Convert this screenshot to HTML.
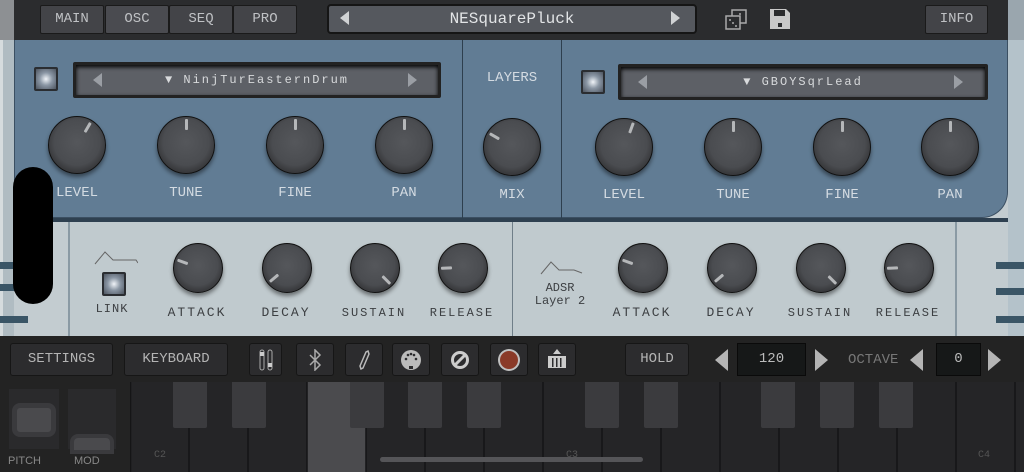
<!DOCTYPE html>
<html><head><meta charset="utf-8"><style>
*{margin:0;padding:0;box-sizing:border-box}
body{width:1024px;height:472px;overflow:hidden;background:#c3ccd0;position:relative;font-family:"Liberation Mono","DejaVu Sans Mono",monospace;}
.a{position:absolute}
.top{left:0;top:0;width:1024px;height:40px;background:#2b2c2e}
.tab{position:absolute;top:5px;height:29px;background:#434448;border:1px solid #1a1a1a;border-radius:2px;color:#bfc1c4;font-size:14px;text-align:center;line-height:27px}
.blue{left:14px;top:40px;width:994px;height:178px;background:#617c94;border-radius:0 0 26px 26px;border:1px solid #3b4f62;border-top:none}
.gray{left:68px;top:222px;width:888px;height:114px;background:#c0cace;border-left:2px solid #8a9aa4}
.disp{position:absolute;height:36px;background:#5d6066;border:3px solid #222;border-radius:2px;box-shadow:inset 0 2px 4px #000;color:#d8dadc;font-size:12px;letter-spacing:2px;text-align:center;line-height:30px}
.k{position:absolute;border-radius:50%;background:radial-gradient(circle at 50% 45%,#55575b 0,#4a4c50 55%,#3a3b3e 70%,#2a2b2d 100%);border:1px solid #111;box-shadow:0 3px 4px rgba(0,0,0,.45)}
.k i{position:absolute;inset:0;display:block}
.k i:before{content:"";position:absolute;left:50%;top:2px;width:3px;margin-left:-1.5px;height:11px;background:#b5b7b9;border-radius:1px}
.lb{position:absolute;color:#d4dbe2;font-size:14px;text-align:center;width:90px}
.lg{position:absolute;color:#3c3f42;font-size:13px;letter-spacing:2px;text-align:center;width:100px}
.led{position:absolute;width:24px;height:24px;background:radial-gradient(circle,#f0f4f8 0,#8a96a4 45%,#4d5560 100%);border:2px solid #2a2d31;border-radius:2px}
.tb{position:absolute;top:343px;height:33px;background:#2c2c2e;border:1px solid #161616;border-radius:3px;color:#b4b4b4;font-size:14px;text-align:center;line-height:31px}
.bk{position:absolute;top:382px;height:46px;width:34px;background:#3b3b3e;border-radius:0 0 2px 2px}
.line{position:absolute;height:7px;background:#3a5566}
</style></head><body>
<div class="a" style="left:0;top:0;width:14px;height:40px;background:#8d9093"></div>
<div class="a top" style="left:14px;width:994px"></div>
<div class="a" style="left:1008px;top:0;width:16px;height:40px;background:#9aa6ae"></div>
<div class="tab" style="left:40px;width:64px">MAIN</div>
<div class="tab" style="left:105px;width:64px;background:#4a4b50">OSC</div>
<div class="tab" style="left:169px;width:64px">SEQ</div>
<div class="tab" style="left:233px;width:64px">PRO</div>
<div class="a" style="left:327px;top:4px;width:370px;height:30px;background:#55585e;border:2px solid #151515;border-radius:4px;color:#e2e4e6;font-size:16px;text-align:center;line-height:26px">NESquarePluck</div>
<div class="a" style="left:340px;top:11px;width:0;height:0;border:7px solid transparent;border-right:9px solid #d0d2d4;border-left:0"></div>
<div class="a" style="left:671px;top:11px;width:0;height:0;border:7px solid transparent;border-left:9px solid #d0d2d4;border-right:0"></div>
<svg class="a" style="left:724px;top:9px" width="24" height="22"><rect x="8" y="1" width="14" height="13" fill="none" stroke="#aaa" stroke-width="1.5"/><rect x="2" y="7" width="14" height="13" fill="#2b2c2e" stroke="#aaa" stroke-width="1.5"/><circle cx="6" cy="11" r="1" fill="#aaa"/><circle cx="9" cy="14" r="1" fill="#aaa"/><circle cx="12" cy="17" r="1" fill="#aaa"/><circle cx="16" cy="5" r="1" fill="#aaa"/></svg>
<svg class="a" style="left:769px;top:8px" width="22" height="22"><path d="M1 1H17L21 5V21H1Z" fill="#c9c9c9"/><rect x="5" y="2" width="11" height="6" fill="#2b2c2e"/><rect x="9" y="15" width="4" height="4" fill="#2b2c2e"/></svg>
<div class="tab" style="left:925px;width:63px">INFO</div>

<div class="a" style="left:0;top:40px;width:14px;height:296px;background:#b0bcc2"></div>
<div class="a" style="left:0;top:40px;width:3px;height:296px;background:#d6dcde"></div>
<div class="a blue"></div>
<div class="a" style="left:1008px;top:40px;width:16px;height:296px;background:#b4c2ca"></div>
<div class="a" style="left:462px;top:40px;width:1px;height:178px;background:#2e3f4e"></div>
<div class="a" style="left:561px;top:40px;width:1px;height:178px;background:#2e3f4e"></div>
<div class="a" style="left:14px;top:218px;width:994px;height:4px;background:#2e4050"></div>

<div class="led" style="left:34px;top:67px"></div>
<div class="disp" style="left:73px;top:62px;width:368px">▼ NinjTurEasternDrum</div>
<div class="a" style="left:93px;top:73px;border:7px solid transparent;border-right:9px solid #9a9ea4;border-left:0"></div>
<div class="a" style="left:408px;top:73px;border:7px solid transparent;border-left:9px solid #9a9ea4;border-right:0"></div>
<div class="lb" style="left:467px;top:70px;width:90px">LAYERS</div>
<div class="led" style="left:581px;top:70px"></div>
<div class="disp" style="left:618px;top:64px;width:370px">▼ GBOYSqrLead</div>
<div class="a" style="left:638px;top:75px;border:7px solid transparent;border-right:9px solid #9a9ea4;border-left:0"></div>
<div class="a" style="left:954px;top:75px;border:7px solid transparent;border-left:9px solid #9a9ea4;border-right:0"></div>

<div class="k" style="left:48px;top:116px;width:58px;height:58px"><i style="transform:rotate(30deg)"></i></div>
<div class="k" style="left:157px;top:116px;width:58px;height:58px"><i></i></div>
<div class="k" style="left:266px;top:116px;width:58px;height:58px"><i></i></div>
<div class="k" style="left:375px;top:116px;width:58px;height:58px"><i></i></div>
<div class="k" style="left:483px;top:118px;width:58px;height:58px"><i style="transform:rotate(-60deg)"></i></div>
<div class="k" style="left:595px;top:118px;width:58px;height:58px"><i style="transform:rotate(20deg)"></i></div>
<div class="k" style="left:704px;top:118px;width:58px;height:58px"><i></i></div>
<div class="k" style="left:813px;top:118px;width:58px;height:58px"><i></i></div>
<div class="k" style="left:921px;top:118px;width:58px;height:58px"><i></i></div>
<div class="lb" style="left:32px;top:185px">LEVEL</div>
<div class="lb" style="left:141px;top:185px">TUNE</div>
<div class="lb" style="left:250px;top:185px">FINE</div>
<div class="lb" style="left:359px;top:185px">PAN</div>
<div class="lb" style="left:467px;top:187px">MIX</div>
<div class="lb" style="left:579px;top:187px">LEVEL</div>
<div class="lb" style="left:688px;top:187px">TUNE</div>
<div class="lb" style="left:797px;top:187px">FINE</div>
<div class="lb" style="left:905px;top:187px">PAN</div>

<div class="a gray"></div>
<div class="a" style="left:512px;top:222px;width:1px;height:114px;background:#6f7e88"></div>
<div class="a" style="left:955px;top:222px;width:2px;height:114px;background:#8a9aa4"></div>
<div class="line" style="left:0;top:262px;width:40px"></div>
<div class="line" style="left:0;top:284px;width:40px"></div>
<div class="line" style="left:0;top:316px;width:28px"></div>
<div class="line" style="left:996px;top:262px;width:28px"></div>
<div class="line" style="left:996px;top:288px;width:28px"></div>
<div class="line" style="left:996px;top:316px;width:28px"></div>
<div class="a" style="left:13px;top:167px;width:40px;height:137px;background:#000;border-radius:20px"></div>

<svg class="a" style="left:94px;top:250px" width="44" height="16"><path d="M1 14L11 2L19 10H42L44 13" fill="none" stroke="#666" stroke-width="1"/></svg>
<div class="led" style="left:102px;top:272px"></div>
<div class="lg" style="left:62px;top:302px;font-size:12px;letter-spacing:1px">LINK</div>
<svg class="a" style="left:540px;top:260px" width="44" height="16"><path d="M1 14L11 2L19 10H34L42 13" fill="none" stroke="#666" stroke-width="1"/></svg>
<div class="lg" style="left:510px;top:282px;font-size:12px;letter-spacing:0;line-height:13px">ADSR<br>Layer 2</div>
<div class="k" style="left:173px;top:243px;width:50px;height:50px"><i style="transform:rotate(-70deg)"></i></div>
<div class="k" style="left:262px;top:243px;width:50px;height:50px"><i style="transform:rotate(-130deg)"></i></div>
<div class="k" style="left:350px;top:243px;width:50px;height:50px"><i style="transform:rotate(135deg)"></i></div>
<div class="k" style="left:438px;top:243px;width:50px;height:50px"><i style="transform:rotate(-92deg)"></i></div>
<div class="k" style="left:618px;top:243px;width:50px;height:50px"><i style="transform:rotate(-70deg)"></i></div>
<div class="k" style="left:707px;top:243px;width:50px;height:50px"><i style="transform:rotate(-130deg)"></i></div>
<div class="k" style="left:796px;top:243px;width:50px;height:50px"><i style="transform:rotate(135deg)"></i></div>
<div class="k" style="left:884px;top:243px;width:50px;height:50px"><i style="transform:rotate(-92deg)"></i></div>
<div class="lg" style="left:147px;top:305px">ATTACK</div>
<div class="lg" style="left:236px;top:305px">DECAY</div>
<div class="lg" style="left:324px;top:306px;font-size:12px">SUSTAIN</div>
<div class="lg" style="left:412px;top:306px;font-size:12px">RELEASE</div>
<div class="lg" style="left:592px;top:305px">ATTACK</div>
<div class="lg" style="left:681px;top:305px">DECAY</div>
<div class="lg" style="left:770px;top:306px;font-size:12px">SUSTAIN</div>
<div class="lg" style="left:858px;top:306px;font-size:12px">RELEASE</div>

<div class="a" style="left:0;top:336px;width:1024px;height:136px;background:#232323"></div>
<div class="tb" style="left:10px;width:103px">SETTINGS</div>
<div class="tb" style="left:124px;width:104px">KEYBOARD</div>
<div class="tb" style="left:249px;width:33px"><svg width="20" height="24" style="margin-top:4px"><rect x="4" y="2" width="4" height="20" rx="2" fill="none" stroke="#aaa"/><rect x="12" y="2" width="4" height="20" rx="2" fill="none" stroke="#aaa"/><rect x="4" y="4" width="4" height="4" fill="#ccc"/><rect x="12" y="15" width="4" height="4" fill="#ccc"/></svg></div>
<div class="tb" style="left:296px;width:38px"><svg width="14" height="22" style="margin-top:5px"><path d="M2 6L12 16L7 21V1L12 6L2 16" fill="none" stroke="#aaa" stroke-width="1.5"/></svg></div>
<div class="tb" style="left:345px;width:38px"><svg width="14" height="22" style="margin-top:5px"><path d="M4 20L3 17L9 3L11 2L12 5L6 19Z" fill="none" stroke="#bbb" stroke-width="1.5"/></svg></div>
<div class="tb" style="left:392px;width:38px"><svg width="22" height="22" style="margin-top:5px"><circle cx="11" cy="11" r="10" fill="#bbb"/><g fill="#2c2c2e"><circle cx="6" cy="10" r="1.3"/><circle cx="16" cy="10" r="1.3"/><circle cx="8" cy="6" r="1.3"/><circle cx="14" cy="6" r="1.3"/><circle cx="11" cy="5" r="1.3"/><rect x="9" y="17" width="4" height="3"/></g></svg></div>
<div class="tb" style="left:441px;width:38px"><svg width="20" height="20" style="margin-top:6px"><circle cx="10" cy="10" r="7.5" fill="none" stroke="#ccc" stroke-width="3"/><path d="M5 15L15 5" stroke="#ccc" stroke-width="3"/></svg></div>
<div class="tb" style="left:490px;width:38px"><svg width="24" height="24" style="margin-top:4px"><circle cx="12" cy="12" r="11" fill="#c0c0c0"/><circle cx="12" cy="12" r="9" fill="#8a3a28"/></svg></div>
<div class="tb" style="left:538px;width:38px"><svg width="24" height="22" style="margin-top:4px"><path d="M12 1L16 6H8Z" fill="#ccc"/><rect x="3" y="8" width="18" height="12" fill="#ccc"/><g fill="#2c2c2e"><rect x="7" y="10" width="1.5" height="9"/><rect x="11" y="10" width="1.5" height="9"/><rect x="15" y="10" width="1.5" height="9"/></g></svg></div>
<div class="tb" style="left:625px;width:64px">HOLD</div>
<div class="a" style="left:715px;top:349px;border:11px solid transparent;border-right:13px solid #b4b4b4;border-left:0;height:22px;width:0"></div>
<div class="a" style="left:737px;top:343px;width:69px;height:33px;background:#161818;border:1px solid #0a0a0a;color:#bbb;font-size:14px;text-align:center;line-height:31px">120</div>
<div class="a" style="left:815px;top:349px;border:11px solid transparent;border-left:13px solid #b4b4b4;border-right:0;height:22px;width:0"></div>
<div class="a" style="left:848px;top:352px;color:#777;font-size:14px">OCTAVE</div>
<div class="a" style="left:910px;top:349px;border:11px solid transparent;border-right:13px solid #b4b4b4;border-left:0;height:22px;width:0"></div>
<div class="a" style="left:936px;top:343px;width:45px;height:33px;background:#161818;border:1px solid #0a0a0a;color:#bbb;font-size:14px;text-align:center;line-height:31px">0</div>
<div class="a" style="left:988px;top:349px;border:11px solid transparent;border-left:13px solid #b4b4b4;border-right:0;height:22px;width:0"></div>

<div class="a" style="left:9px;top:389px;width:50px;height:60px;background:#2a2a2c"></div>
<div class="a" style="left:12px;top:403px;width:44px;height:34px;border:5px solid #3a3a3d;border-radius:8px;background:#4a4a4d"></div>
<div class="a" style="left:68px;top:389px;width:48px;height:60px;background:#2a2a2c"></div>
<div class="a" style="left:70px;top:434px;width:44px;height:20px;border:4px solid #3a3a3d;border-radius:8px 8px 0 0;background:#4a4a4d"></div>
<div class="a" style="left:8px;top:455px;color:#888;font-size:11px;font-family:'Liberation Sans',sans-serif">PITCH</div>
<div class="a" style="left:74px;top:455px;color:#888;font-size:11px;font-family:'Liberation Sans',sans-serif">MOD</div>

<div class="a" style="left:130px;top:382px;width:894px;height:90px;background:#252527"></div>
<div class="a" style="left:307px;top:382px;width:59px;height:90px;background:#4b4b4e"></div>
<svg class="a" style="left:130px;top:382px" width="894" height="90"><g stroke="#151516" stroke-width="1.5">
<line x1="0.5" y1="0" x2="0.5" y2="90"/><line x1="59" y1="0" x2="59" y2="90"/><line x1="118" y1="0" x2="118" y2="90"/><line x1="177" y1="0" x2="177" y2="90"/><line x1="236" y1="0" x2="236" y2="90"/><line x1="295" y1="0" x2="295" y2="90"/><line x1="354" y1="0" x2="354" y2="90"/><line x1="413" y1="0" x2="413" y2="90"/><line x1="472" y1="0" x2="472" y2="90"/><line x1="531" y1="0" x2="531" y2="90"/><line x1="590" y1="0" x2="590" y2="90"/><line x1="649" y1="0" x2="649" y2="90"/><line x1="708" y1="0" x2="708" y2="90"/><line x1="767" y1="0" x2="767" y2="90"/><line x1="826" y1="0" x2="826" y2="90"/><line x1="885" y1="0" x2="885" y2="90"/></g></svg>
<div class="bk" style="left:173px"></div><div class="bk" style="left:232px"></div>
<div class="bk" style="left:350px"></div><div class="bk" style="left:408px"></div><div class="bk" style="left:467px"></div>
<div class="bk" style="left:585px"></div><div class="bk" style="left:644px"></div>
<div class="bk" style="left:761px"></div><div class="bk" style="left:820px"></div><div class="bk" style="left:879px"></div>
<div class="a" style="left:154px;top:450px;color:#555;font-size:10px">C2</div>
<div class="a" style="left:566px;top:450px;color:#555;font-size:10px">C3</div>
<div class="a" style="left:978px;top:450px;color:#555;font-size:10px">C4</div>
<div class="a" style="left:380px;top:457px;width:263px;height:5px;background:#555558;border-radius:3px"></div>
</body></html>
